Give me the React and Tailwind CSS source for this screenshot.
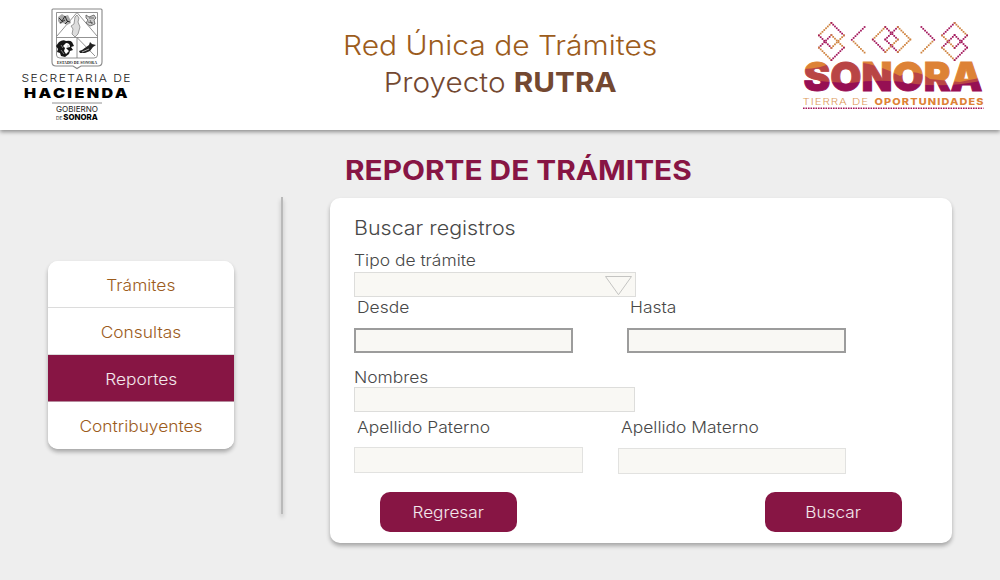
const P = "#a3175c";
const O = "#cf8440";

function Dots({ from, to, n = 8, color }) {
  const s = 1.75;
  return (
    <g fill={color}>
      {Array.from({ length: n }, (_, i) => {
        const t = i / (n - 1);
        const x = from[0] + (to[0] - from[0]) * t;
        const y = from[1] + (to[1] - from[1]) * t;
        return <rect key={i} x={x - s / 2} y={y - s / 2} width={s} height={s} />;
      })}
    </g>
  );
}

function Rhombus({ x, y, ul, ur, ll, lr }) {
  const h = 12.5;
  return (
    <g>
      <Dots from={[x - h, y]} to={[x, y - h]} color={ul} />
      <Dots from={[x + h, y]} to={[x, y - h]} color={ur} />
      <Dots from={[x - h, y]} to={[x, y + h]} color={ll} />
      <Dots from={[x + h, y]} to={[x, y + h]} color={lr} />
    </g>
  );
}

function SonoraLogo() {
  return (
    <svg width="190" height="96" viewBox="798 18 190 96" fontFamily="Inter, 'Liberation Sans', sans-serif">
      <defs>
        <pattern id="bands" patternUnits="userSpaceOnUse" x="798" y="56" width="200" height="40">
          <g transform="translate(-798 -56)">
            <rect x="798" y="56" width="200" height="40" fill="#dd8236" />
            <path d="M798 69Q820 70 838 60L858 62Q880 65 900 76Q915 67 930 79L960 82Q975 78 998 76V96H798Z" fill="#b94545" />
            <path d="M798 79Q825 82 850 83Q885 78 915 84Q950 88 985 80H998V96H798Z" fill="#960f53" />
          </g>
        </pattern>
      </defs>
      <Rhombus x={831.4} y={35.4} ul={O} ur={P} ll={P} lr={O} />
      <Rhombus x={831.4} y={47.6} ul={P} ur={O} ll={O} lr={P} />
      <Dots from={[864.6, 27]} to={[851.8, 39.8]} color={P} />
      <Dots from={[864.6, 52.6]} to={[853.6, 41.6]} n={7} color={O} />
      <Rhombus x={885.3} y={39.5} ul={O} ur={P} ll={P} lr={O} />
      <Rhombus x={897.8} y={39.5} ul={P} ur={O} ll={P} lr={O} />
      <Dots from={[921.4, 27]} to={[934.2, 39.8]} color={P} />
      <Dots from={[921.4, 52.6]} to={[932.4, 41.6]} n={7} color={O} />
      <Rhombus x={954.6} y={35.4} ul={P} ur={O} ll={O} lr={P} />
      <Rhombus x={954.6} y={47.6} ul={P} ur={P} ll={O} lr={P} />
      <text x="803.5" y="91" fontSize="39.5" fontWeight="900" fill="url(#bands)" stroke="url(#bands)" strokeWidth="0.9" textLength="179" lengthAdjust="spacingAndGlyphs">SONORA</text>
      <text x="802.5" y="105" fontSize="9.6" fontWeight="300" letterSpacing="0.8" fill="#dd9a5c" textLength="66.5" lengthAdjust="spacingAndGlyphs">TIERRA DE</text>
      <text x="874.5" y="105" fontSize="9.6" fontWeight="800" letterSpacing="1" fill="#dd8236" textLength="110" lengthAdjust="spacingAndGlyphs">OPORTUNIDADES</text>
      <path d="M803 108.3H983.5" stroke="#a3175c" strokeWidth="1.4" strokeDasharray="1.6 0.9" />
    </svg>
  );
}

function HaciendaLogo() {
  return (
    <svg width="120" height="118" viewBox="16 5 120 118" fontFamily="Inter, 'Liberation Sans', sans-serif">
      <path d="M53 9H101Q102 9 102 10V62Q102 66 98 66H81L77 68.5L73 66H56Q52 66 52 62V10Q52 9 53 9Z" fill="#fff" stroke="#888" strokeWidth="1.1" />
      <g fill="none" stroke="#777" strokeWidth="0.8">
        <path d="M56.5 12.5H97.5V55Q97.5 58 94 58H60Q56.5 58 56.5 55Z" />
        <path d="M56.5 37.5H97.5M77 37.5V58M77 12.5L57 36M77 12.5L97 36M77 37.5L95 56" />
      </g>
      <path d="M58 17l4-3 3 2 3-1 2 4 1 4-4 2-4-2-3 1-2-3Z" fill="#aaa" />
      <path d="M59 18l3 3 3-5 2 5 3 1M60 23l5-3M65 24l3-3" stroke="#222" strokeWidth="0.9" fill="none" />
      <path d="M86 15l3 2 5-2 2 3-2 2 1 4-5 2-4-3 2-3-2-2Z" fill="#ccc" stroke="#555" strokeWidth="0.8" />
      <path d="M89 18h5M88 22l5 1M90 20l2 4" stroke="#444" strokeWidth="0.7" />
      <path d="M75 17l2-2 2 3-1 4 2 5-2 7-3 3-3-3 1-5-2-3 3-2Z" fill="#ddd" stroke="#777" strokeWidth="0.7" />
      <path d="M59 42q4-3 7-1 4-1 6 1l2 4-3 1 2 3-3 1-1 3-4 3-4-1-1-3-3-1 1-3-2-3Z" fill="#161616" />
      <path d="M66 43q4 0 4 4l-4 1 3 3-3 3-2-3 1-3-2-2Z" fill="#fff" />
      <path d="M61 45l2 3M61 50l3 4M67 46l2 0" stroke="#999" strokeWidth="0.8" fill="none" />
      <path d="M79 51l3-1 7-5 1-3 2 2 4 1-3 2-3 4-5 2-5 0Z" fill="#222" />
      <path d="M82 52l7-3" stroke="#ccc" strokeWidth="0.8" />
      <text x="57" y="64" fontSize="4.8" fontWeight="700" fill="#222" textLength="40" lengthAdjust="spacingAndGlyphs" fontFamily="'Liberation Serif', serif">ESTADO DE SONORA</text>
      <text x="21.5" y="82" fontSize="10.8" fontWeight="300" letterSpacing="1.3" fill="#222" textLength="110.5" lengthAdjust="spacingAndGlyphs">SECRETARIA DE</text>
      <text x="24" y="97.8" fontSize="13.4" fontWeight="900" letterSpacing="2" fill="#000" textLength="106" lengthAdjust="spacingAndGlyphs">HACIENDA</text>
      <path d="M52 103H102" stroke="#777" strokeWidth="0.8" />
      <text x="56" y="112.4" fontSize="8" fill="#222" textLength="42" lengthAdjust="spacingAndGlyphs">GOBIERNO</text>
      <text x="56" y="119.8" fontSize="4.6" fill="#222" textLength="6.5" lengthAdjust="spacingAndGlyphs">DE</text>
      <text x="63.3" y="119.8" fontSize="7.8" fontWeight="800" fill="#000" textLength="34.5" lengthAdjust="spacingAndGlyphs">SONORA</text>
    </svg>
  );
}

function MenuItem({ children, active }) {
  return (
    <button className={active
      ? "h-[47px] w-full border-b border-[#b58a9c] bg-[#871544] pt-[3px] text-[15.5px] font-[350] text-white/90"
      : "h-[47px] w-full border-b border-[#dcdcdc] bg-white pt-[3px] text-[15.5px] font-[350] text-[#9c5c1c] last:border-b-0 last:pt-0.5"}>
      <span className="inline-block scale-x-[1.12]">{children}</span>
    </button>
  );
}

function Label({ children, className }) {
  return (
    <div className={`text-[15.5px] leading-[22px] font-[350] whitespace-nowrap text-[#484848] ${className}`}>
      <span className="inline-block origin-left scale-x-[1.125]">{children}</span>
    </div>
  );
}

function Action({ children }) {
  return (
    <button className="h-10 w-[137px] rounded-[10px] bg-[#871544] pt-0.5 text-[15.5px] font-[350] text-white/90">
      <span className="inline-block scale-x-[1.11]">{children}</span>
    </button>
  );
}

export default function App() {
  return (
    <div className="flex h-[580px] w-[1000px] flex-col overflow-hidden bg-[#eeeeee] font-['Inter','Liberation_Sans',sans-serif]">
      <header className="z-10 flex h-[130px] shrink-0 justify-between bg-white pr-3 pl-4 shadow-[0_2px_4px_rgba(0,0,0,0.4)]">
        <div className="w-[186px] pt-[5px]"><HaciendaLogo /></div>
        <div className="pt-[27px] text-center text-[27.5px] leading-[37px] font-[350] whitespace-nowrap text-[#9c5c1c]">
          <div className="scale-x-[1.09]">Red Única de Trámites</div>
          <div className="scale-x-[1.08] text-[#734831]">Proyecto <b className="font-bold">RUTRA</b></div>
        </div>
        <div className="w-[190px] pt-[18px]"><SonoraLogo /></div>
      </header>
      <main className="flex flex-1">
        <nav className="mt-[131px] ml-12 h-[188px] w-[186px] shrink-0 overflow-hidden rounded-[10px] bg-white shadow-[0_3px_4px_rgba(0,0,0,0.3)]">
          <MenuItem>Trámites</MenuItem>
          <MenuItem>Consultas</MenuItem>
          <MenuItem active>Reportes</MenuItem>
          <MenuItem>Contribuyentes</MenuItem>
        </nav>
        <div className="mt-[67px] ml-[47px] h-[317px] w-0.5 shrink-0 bg-[#b9b9b9] shadow-[0_3px_4px_rgba(0,0,0,0.25)]" />
        <section className="ml-[47px] w-[622px]">
          <h1 className="h-[68px] pt-[22px] pl-[15px] text-[26.5px] leading-9 font-bold whitespace-nowrap text-[#871544]">
            <span className="inline-block origin-left scale-x-[1.125]">REPORTE DE TRÁMITES</span>
          </h1>
          <form className="h-[345px] rounded-[10px] bg-white px-6 pt-4 shadow-[0_3px_4px_rgba(0,0,0,0.3)]">
            <h2 className="h-[36px] text-[19.5px] leading-7 font-[350] text-[#484848]">
              <span className="inline-block origin-left scale-x-[1.1]">Buscar registros</span>
            </h2>
            <Label className="h-[22px]">Tipo de trámite</Label>
            <div className="flex h-[25px] w-[282px] justify-end border border-[#dddddb] bg-[#f9f8f4] pt-[3px] pr-[3px]">
              <svg width="28" height="20" viewBox="0 0 28 20"><path d="M1.5 0.5H27.5L14.5 18.7Z" fill="none" stroke="#c4c4c2" /></svg>
            </div>
            <div className="flex gap-[54px]">
              <div>
                <Label className="h-[31px] pl-[3px]">Desde</Label>
                <input className="block h-[25px] w-[219px] border-2 border-[#9c9c9c] bg-[#f9f8f4]" />
              </div>
              <div>
                <Label className="h-[31px] pl-[3px]">Hasta</Label>
                <input className="block h-[25px] w-[219px] border-2 border-[#9c9c9c] bg-[#f9f8f4]" />
              </div>
            </div>
            <Label className="mt-[14px] h-5">Nombres</Label>
            <input className="block h-[25px] w-[281px] border border-[#dddddb] bg-[#f9f8f4]" />
            <div className="mt-[5px] flex gap-[35px]">
              <div>
                <Label className="h-[30px] pl-[3px]">Apellido Paterno</Label>
                <input className="block h-[26px] w-[229px] border border-[#e2e2e0] bg-[#f9f8f4]" />
              </div>
              <div>
                <Label className="h-[31px] pl-[3px]">Apellido Materno</Label>
                <input className="block h-[26px] w-[228px] border border-[#e2e2e0] bg-[#f9f8f4]" />
              </div>
            </div>
            <div className="mt-[18px] flex justify-between pr-[26px] pl-[26px]">
              <Action>Regresar</Action>
              <Action>Buscar</Action>
            </div>
          </form>
        </section>
      </main>
    </div>
  );
}
